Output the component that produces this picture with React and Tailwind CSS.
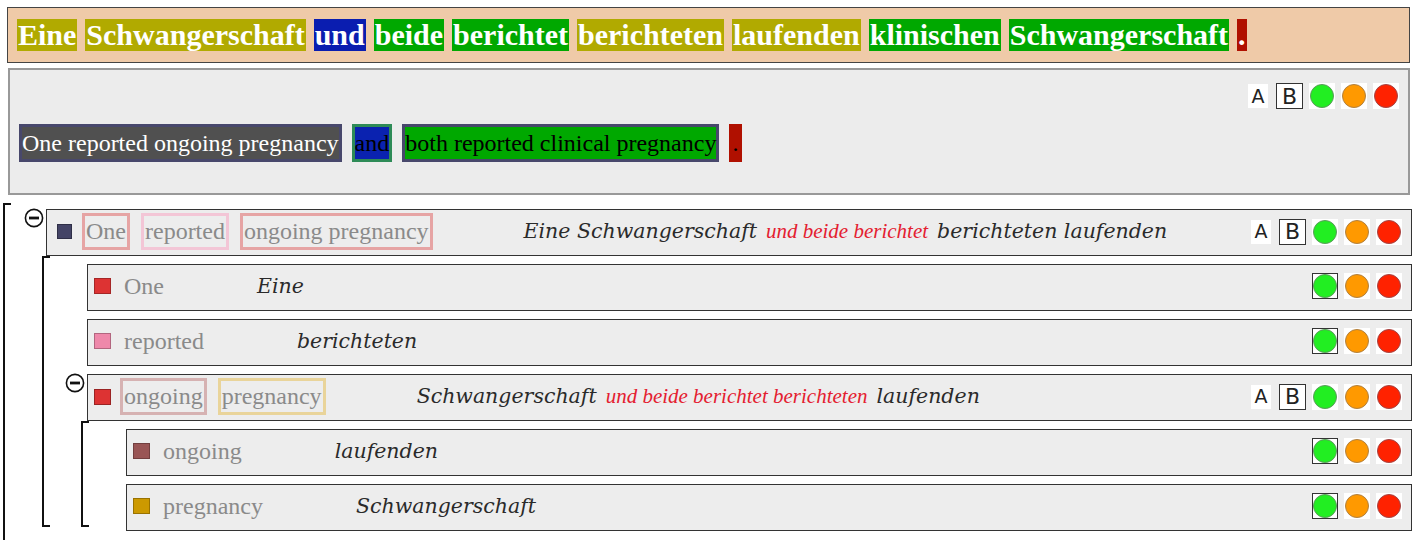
import React from 'react';

const SERIF = { fontFamily: '"Liberation Serif", "Times New Roman", serif' };
const ITALIC = { fontFamily: '"DejaVu Serif", serif' };
const SANS = { fontFamily: '"DejaVu Sans", "Liberation Sans", sans-serif' };

const topWords = [
  ['Eine', 'bg-[#b1aa00]'],
  ['Schwangerschaft', 'bg-[#b1aa00]'],
  ['und', 'bg-[#0a1db0]'],
  ['beide', 'bg-[#00a800]'],
  ['berichtet', 'bg-[#00a800]'],
  ['berichteten', 'bg-[#b1aa00]'],
  ['laufenden', 'bg-[#b1aa00]'],
  ['klinischen', 'bg-[#00a800]'],
  ['Schwangerschaft', 'bg-[#00a800]'],
  ['.', 'bg-[#b01000]'],
];

function Circle({ color, selected }) {
  return (
    <div
      className={`w-[26px] h-[26px] bg-white flex items-center justify-center ${
        selected ? 'border border-[#333]' : ''
      }`}
    >
      <div className={`w-[24px] h-[24px] rounded-full border ${color}`} />
    </div>
  );
}

function Controls({ ab }) {
  return (
    <div className="ml-auto flex items-center gap-[6px]" style={SANS}>
      {ab && (
        <>
          <div className="w-[20px] h-[24px] bg-white flex items-center justify-center text-[19px] text-[#222] mr-[2px]">
            A
          </div>
          <div className="w-[27px] h-[26px] bg-white border border-[#333] flex items-center justify-center text-[22px] text-[#222]">
            B
          </div>
        </>
      )}
      <Circle color="bg-[#22ee22] border-[#5c9a5c]" selected={!ab} />
      <Circle color="bg-[#ff9900] border-[#b08040]" />
      <Circle color="bg-[#ff2200] border-[#a24444]" />
    </div>
  );
}

function MinusIcon() {
  return (
    <svg width="20" height="20" viewBox="0 0 20 20" className="mt-[-1px]">
      <circle cx="10" cy="10" r="8.6" fill="white" stroke="#111" strokeWidth="1.6" />
      <rect x="5" y="8.6" width="10" height="2.8" fill="#111" />
    </svg>
  );
}

function Translation({ parts }) {
  return (
    <div className="flex items-baseline gap-[9px] italic">
      {parts.map(([t, red], i) =>
        red ? (
          <span key={i} className="text-[21px] text-[#e42030]" style={SERIF}>
            {t}
          </span>
        ) : (
          <span key={i} className="text-[20.5px] text-[#2a2a2a]" style={ITALIC}>
            {t}
          </span>
        )
      )}
    </div>
  );
}

function GroupRow({ color, square, chips, parts }) {
  return (
    <div className="flex items-center h-[47px] border border-[#333] bg-[#ededed] pr-[9px] pb-[2px]">
      <div className={`${square} border border-black/30 ${color}`} />
      <div className="flex items-center gap-[11px]" style={SERIF}>
        {chips.map(([t, b]) => (
          <span key={t} className={`border-[3px] ${b} px-[1px] text-[24px] leading-[31px] text-[#8a8a8a]`}>
            {t}
          </span>
        ))}
      </div>
      <div className="ml-[91px]">
        <Translation parts={parts} />
      </div>
      <Controls ab />
    </div>
  );
}

function LeafRow({ color, label, word }) {
  return (
    <div className="flex items-center h-[47px] border border-[#333] bg-[#ededed] pr-[9px] pb-[3px]">
      <div className={`w-[17px] h-[16px] ml-[6px] border border-black/25 ${color}`} />
      <span className="ml-[13px] text-[24px] text-[#8a8a8a]" style={SERIF}>
        {label}
      </span>
      <span className="ml-[93px] text-[20.5px] italic text-[#2a2a2a]" style={ITALIC}>
        {word}
      </span>
      <Controls />
    </div>
  );
}

function Node({ icon, row, children, offset }) {
  return (
    <div className="flex flex-col">
      <div className="flex items-start">
        <div className="w-[22px] shrink-0">{icon && <MinusIcon />}</div>
        <div className="flex-1">{row}</div>
      </div>
      {children && (
        <div className={`flex ${offset}`}>
          <div className="w-[8px] shrink-0 border-l-2 border-t-2 border-b-2 border-[#111] mb-[4px]" />
          <div className="flex-1 flex flex-col gap-[8px] pt-[8px] pl-[15px]">{children}</div>
        </div>
      )}
    </div>
  );
}

export default function App() {
  return (
    <div className="w-[1420px] h-[540px] overflow-hidden bg-white pl-[7px] pr-[10px] pt-[7px]">
      <div className="h-[56px] flex items-center gap-[8px] px-[9px] bg-[#efcaa8] border border-[#444]" style={SERIF}>
        {topWords.map(([w, bg], i) => (
          <span key={i} className={`${bg} px-[1px] h-[32px] leading-[32px] text-[30px] font-bold text-white`}>
            {w}
          </span>
        ))}
      </div>

      <div className="mt-[5px] ml-[1px] h-[127px] bg-[#ececec] border-2 border-[#999] px-[9px] pt-[13px] flex flex-col">
        <div className="flex">
          <Controls ab />
        </div>
        <div className="mt-[15px] flex items-center gap-[10px] text-[24px] leading-[32px]" style={SERIF}>
          <span className="border-[3px] border-[#48486c] bg-[#505050] text-white">One reported ongoing pregnancy</span>
          <span className="border-[3px] border-[#2e8b57] bg-[#0a22b0] text-black">and</span>
          <span className="border-[3px] border-[#48486c] bg-[#00a800] text-black">both reported clinical pregnancy</span>
          <span className="border-[3px] border-[#b01000] bg-[#b01000] text-black w-[13px] overflow-hidden">.</span>
        </div>
      </div>

      <div className="mt-[8px] ml-[-4px] mr-[-2px] flex">
        <div className="w-[8px] shrink-0 border-l-2 border-t-2 border-[#111] h-[400px]" />
        <div className="flex-1 pl-[13px] pt-[6px]">
          <Node
            icon
            offset="ml-[18px]"
            row={
              <GroupRow
                color="bg-[#444466]"
                square="w-[15px] h-[15px] ml-[10px] mr-[10px]"
                chips={[
                  ['One', 'border-[#e6a4a4]'],
                  ['reported', 'border-[#f3c6d6]'],
                  ['ongoing pregnancy', 'border-[#e6a4a4]'],
                ]}
                parts={[
                  ['Eine Schwangerschaft'],
                  ['und beide berichtet', true],
                  ['berichteten laufenden'],
                ]}
              />
            }
          >
            <Node row={<LeafRow color="bg-[#dd3333]" label="One" word="Eine" />} />
            <Node row={<LeafRow color="bg-[#ee88aa]" label="reported" word="berichteten" />} />
            <Node
              icon
              offset="ml-[16px]"
              row={
                <GroupRow
                  color="bg-[#dd3333]"
                  square="w-[17px] h-[16px] ml-[6px] mr-[9px]"
                  chips={[
                    ['ongoing', 'border-[#d6b2b2]'],
                    ['pregnancy', 'border-[#e9d49a]'],
                  ]}
                  parts={[
                    ['Schwangerschaft'],
                    ['und beide berichtet berichteten', true],
                    ['laufenden'],
                  ]}
                />
              }
            >
              <Node row={<LeafRow color="bg-[#995555]" label="ongoing" word="laufenden" />} />
              <Node row={<LeafRow color="bg-[#cc9900]" label="pregnancy" word="Schwangerschaft" />} />
            </Node>
          </Node>
        </div>
      </div>
    </div>
  );
}
